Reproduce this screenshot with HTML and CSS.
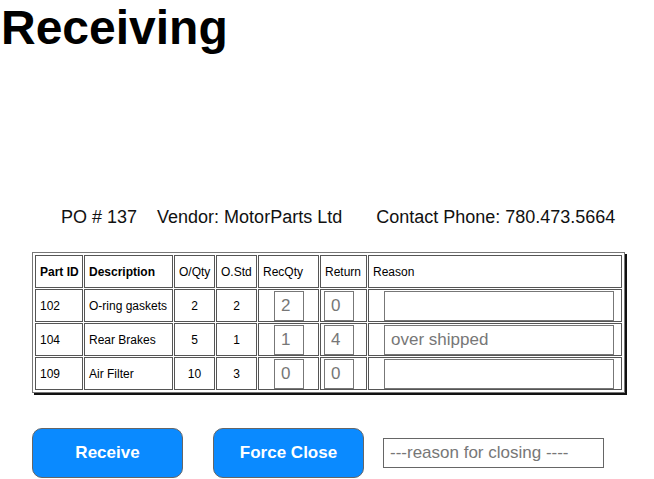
FILE: index.html
```html
<!DOCTYPE html>
<html>
<head>
<meta charset="utf-8">
<link rel="stylesheet" href="styles.css">
</head>
<body>
<h1 class="title">Receiving</h1>
<div class="info">
  <span class="po">PO # 137</span>
  <span class="vendor">Vendor: MotorParts Ltd</span>
  <span class="phone">Contact Phone: 780.473.5664</span>
</div>
<div class="content">
  <table class="grid">
    <colgroup>
      <col class="c-id"><col class="c-desc"><col class="c-qty"><col class="c-std"><col class="c-rec"><col class="c-ret"><col class="c-reason">
    </colgroup>
    <thead>
      <tr>
        <th>Part ID</th>
        <th>Description</th>
        <th class="light">O/Qty</th>
        <th class="light">O.Std</th>
        <th class="light">RecQty</th>
        <th class="light">Return</th>
        <th class="light">Reason</th>
      </tr>
    </thead>
    <tbody>
      <tr>
        <td>102</td>
        <td>O-ring gaskets</td>
        <td class="num">2</td>
        <td class="num">2</td>
        <td class="in-rec"><input class="box small" value="2"></td>
        <td class="in-ret"><input class="box small" value="0"></td>
        <td class="in-reason"><input class="box wide" value=""></td>
      </tr>
      <tr>
        <td>104</td>
        <td>Rear Brakes</td>
        <td class="num">5</td>
        <td class="num">1</td>
        <td class="in-rec"><input class="box small" value="1"></td>
        <td class="in-ret"><input class="box small" value="4"></td>
        <td class="in-reason"><input class="box wide" value="over shipped"></td>
      </tr>
      <tr>
        <td>109</td>
        <td>Air Filter</td>
        <td class="num">10</td>
        <td class="num">3</td>
        <td class="in-rec"><input class="box small" value="0"></td>
        <td class="in-ret"><input class="box small" value="0"></td>
        <td class="in-reason"><input class="box wide" value=""></td>
      </tr>
    </tbody>
  </table>
  <div class="actions">
    <button class="btn">Receive</button>
    <button class="btn">Force Close</button>
    <input class="close-reason" placeholder="---reason for closing ----">
  </div>
</div>
</body>
</html>
```
FILE: styles.css
```css
html, body {
  margin: 0;
  padding: 0;
  background: #fff;
  font-family: "Liberation Sans", Arial, sans-serif;
  color: #000;
}

.title {
  margin: 0;
  font-size: 48px;
  line-height: 55px;
  font-weight: bold;
  padding-left: 1px;
}

.info {
  margin-top: 152px;
  padding-left: 61px;
  font-size: 18px;
  line-height: 21px;
  display: flex;
  color: #111;
}

.po { margin-right: 20px; }
.vendor { margin-right: 34px; }

.content {
  padding-left: 32px;
}

.grid {
  margin-top: 24px;
  border-collapse: separate;
  border-spacing: 1px;
  padding: 1px;
  border: 1px solid #777;
  box-shadow: 2px 2px 0 #111;
  table-layout: fixed;
  width: 590px;
  font-size: 12px;
}

.c-id { width: 48px; }
.c-desc { width: 89px; }
.c-qty { width: 41px; }
.c-std { width: 41px; }
.c-rec { width: 61px; }
.c-ret { width: 47px; }
.c-reason { width: 254px; }

.grid th, .grid td {
  border: 1px solid #555;
  height: 31px;
  padding: 0 0 0 4px;
  text-align: left;
  vertical-align: middle;
  white-space: nowrap;
  overflow: hidden;
}

.grid th {
  font-weight: bold;
  height: 31px;
}

.grid th.light {
  font-weight: normal;
}

.grid td.num {
  text-align: center;
  padding: 0;
}

.grid td.in-rec { padding-left: 15px; }
.grid td.in-ret { padding-left: 3px; }
.grid td.in-reason { padding-left: 15px; }

.box {
  box-sizing: border-box;
  height: 30px;
  border: 1px solid #777;
  margin: 0;
  display: block;
  font-family: "Liberation Sans", Arial, sans-serif;
  font-size: 17px;
  color: #777;
  padding: 0 0 0 6px;
  background: #fff;
  outline: none;
}

.box.small { width: 30px; }
.box.wide { width: 230px; }

.actions {
  margin-top: 35px;
  display: flex;
  align-items: center;
}

.btn {
  width: 151px;
  height: 50px;
  box-sizing: border-box;
  background: #0a8aff;
  border: 1px solid #666;
  border-radius: 10px;
  color: #fff;
  font-family: "Liberation Sans", Arial, sans-serif;
  font-weight: bold;
  font-size: 17px;
  margin: 0 30px 0 0;
  padding: 0;
}

.btn + .btn {
  margin-right: 19px;
}

.close-reason {
  box-sizing: border-box;
  width: 221px;
  height: 30px;
  border: 1px solid #666;
  margin: 0;
  padding: 0 0 0 6px;
  font-family: "Liberation Sans", Arial, sans-serif;
  font-size: 17px;
  color: #777;
  outline: none;
}

.close-reason::placeholder {
  color: #777;
  opacity: 1;
}
```
